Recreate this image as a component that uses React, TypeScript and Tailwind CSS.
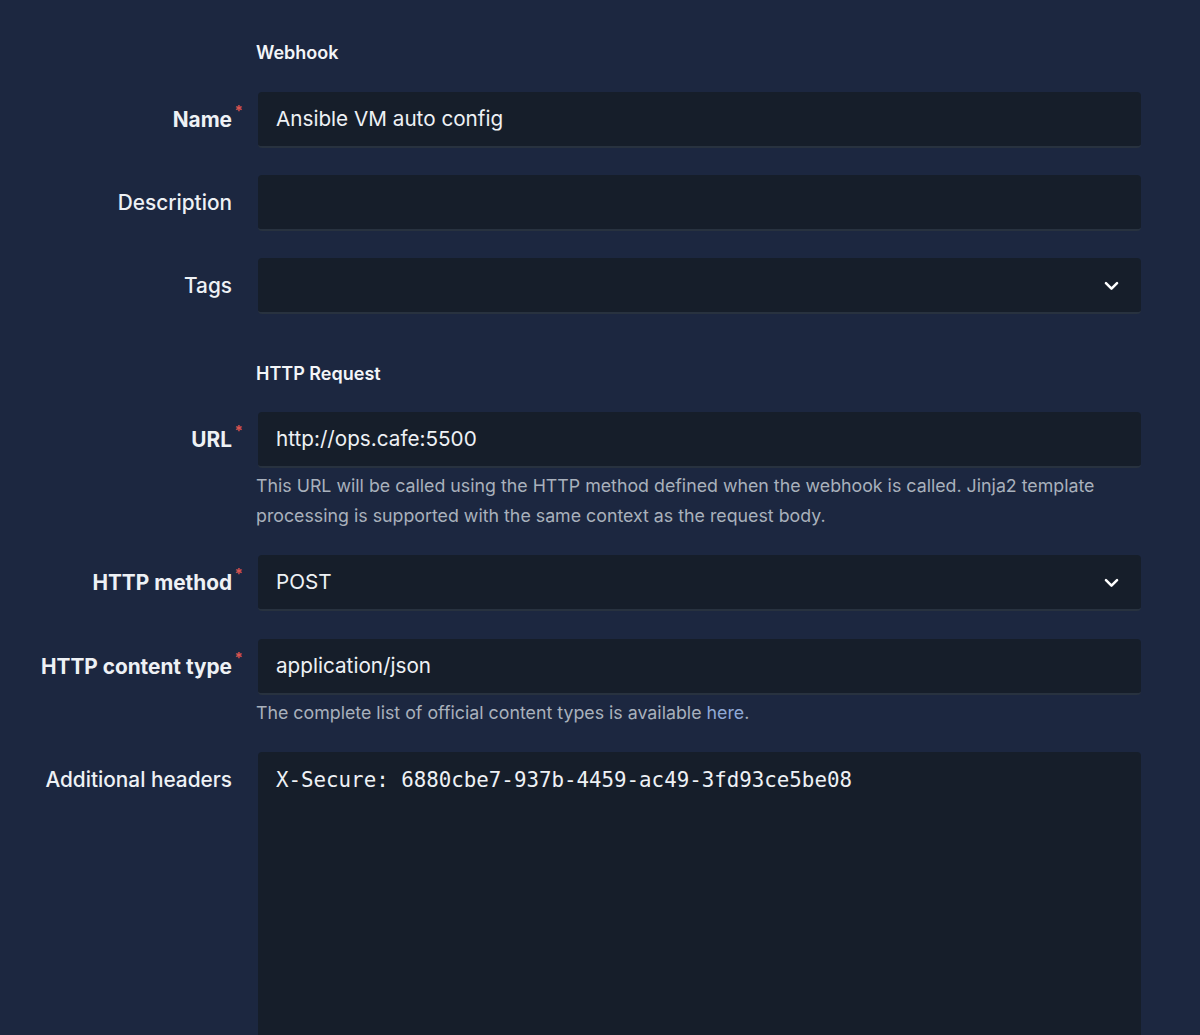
import React from "react";

type RowProps = {
  label: string;
  required?: boolean;
  children: React.ReactNode;
  help?: React.ReactNode;
  className?: string;
};

const Row = ({ label, required, children, help, className }: RowProps) => {
  return (
    <div className={"flex " + (className ?? "")}>
      {/* Label */}
      <div className="w-[232px] shrink-0 h-14 flex items-center justify-end">
        <span
          className={
            "relative text-[20.8px] text-[#eef1f5] " +
            (required ? "font-bold" : "font-medium")
          }
        >
          {label}
          {required && (
            <span className="absolute -right-[11px] -top-[4px] text-[15px] font-bold text-[#d9534f]">
              *
            </span>
          )}
        </span>
      </div>

      {/* Field */}
      <div className="flex-1 ml-[26px]">
        {children}
        {help && (
          <p className="-ml-[2px] mt-[3px] text-[17.8px] leading-[30px] text-[#a9b1bc]">
            {help}
          </p>
        )}
      </div>
    </div>
  );
};

const Field = ({ value, select }: { value?: string; select?: boolean }) => (
  <div
    className="h-14 rounded-[4px] bg-[#161e2a] border-b-2 border-[#28323f]
    flex items-center justify-between pl-[18px] pr-[20px]
    text-[20.7px] text-[#eef1f5]"
  >
    <span>{value}</span>
    {select && (
      <svg width="19" height="19" viewBox="0 0 24 24" fill="none">
        <path
          d="M5 9l7 7 7-7"
          stroke="#ffffff"
          strokeWidth="3.2"
          strokeLinecap="round"
          strokeLinejoin="round"
        />
      </svg>
    )}
  </div>
);

const Heading = ({ title, className }: { title: string; className?: string }) => (
  <div className={"pl-[256px] " + (className ?? "")}>
    <h3 className="text-[18px] leading-[22px] font-semibold text-[#f3f5f8]">
      {title}
    </h3>
  </div>
);

export default function App() {
  return (
    <div
      className="w-[1200px] h-[1035px] overflow-hidden bg-[#1c2740] pr-[59px] pt-[42px]"
      style={{ fontFamily: "Inter, 'Noto Sans', sans-serif" }}
    >
      <Heading title="Webhook" />

      <div className="mt-[28px] flex flex-col gap-[27px]">
        <Row label="Name" required>
          <Field value="Ansible VM auto config" />
        </Row>
        <Row label="Description">
          <Field />
        </Row>
        <Row label="Tags">
          <Field select />
        </Row>
      </div>

      <Heading title="HTTP Request" className="mt-[49px]" />

      <div className="mt-[27px] flex flex-col">
        <Row
          label="URL"
          required
          help="This URL will be called using the HTTP method defined when the webhook is called. Jinja2 template processing is supported with the same context as the request body."
        >
          <Field value="http://ops.cafe:5500" />
        </Row>
        <Row label="HTTP method" required className="mt-[24px]">
          <Field value="POST" select />
        </Row>
        <Row
          label="HTTP content type"
          required
          className="mt-[28px]"
          help={
            <>
              The complete list of official content types is available{" "}
              <span className="text-[#8fa9d6]">here</span>.
            </>
          }
        >
          <Field value="application/json" />
        </Row>
        <Row label="Additional headers" className="mt-[24px]">
          <div
            className="h-[320px] rounded-[4px] bg-[#161e2a] pl-[18px] pt-[12px]
            text-[20.8px] leading-[32px] text-[#eef1f5]"
            style={{ fontFamily: "'DejaVu Sans Mono', monospace" }}
          >
            X-Secure: 6880cbe7-937b-4459-ac49-3fd93ce5be08
          </div>
        </Row>
      </div>
    </div>
  );
}
